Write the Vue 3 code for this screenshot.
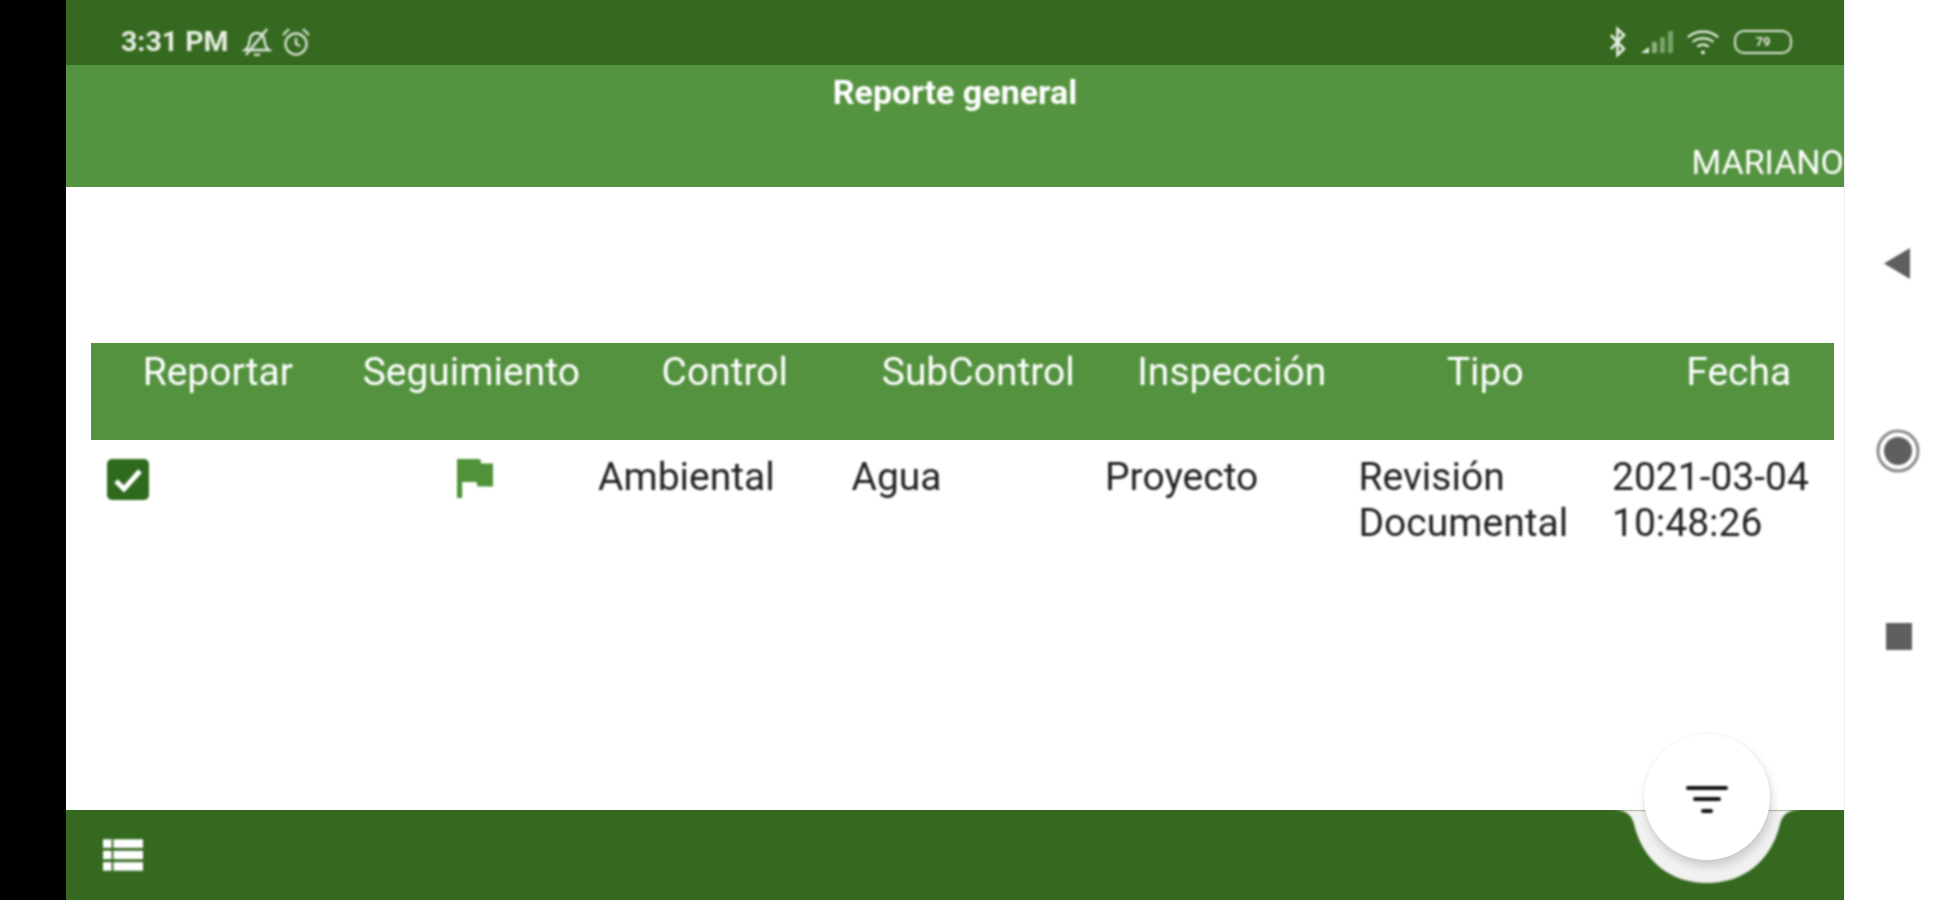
<template>
  <div class="screen">
    <div class="left-edge"></div>

    <div class="phone">
      <div class="status-bar">
        <div class="status-left soft">
          <span class="time">3:31 PM</span>
          <svg class="st-icon" width="30" height="32" viewBox="0 0 30 32" fill="none" stroke="#dfe8da" stroke-width="2.4">
            <path d="M3 24c3-2 4-4 4.500-9 .5-5 3-8 7.500-8s7 3 7.500 8c.5 5 1.500 7 4.500 9z" />
            <path d="M12 28c1.500 1.500 4.500 1.500 6 0" />
            <path d="M4 29 25 3" />
          </svg>
          <svg class="st-icon" width="32" height="32" viewBox="0 0 32 32" fill="none" stroke="#d5e0cf" stroke-width="2.4">
            <circle cx="16" cy="18" r="10.500" />
            <path d="M16 12v6l4 2" />
            <path d="M3 9l6-6M29 9l-6-6" />
          </svg>
        </div>
        <div class="status-right soft">
          <svg width="20" height="32" viewBox="0 0 20 32" fill="none" stroke="#e8eee4" stroke-width="2.600">
            <path d="M3 9l13 14-6.500 6V3L16 9 3 23" />
          </svg>
          <svg width="36" height="28" viewBox="0 0 36 28">
            <path d="M2 25l8-6v6z" fill="#e8eee4" />
            <rect x="13" y="14" width="5" height="11" fill="#8fb07f" />
            <rect x="21" y="9" width="5" height="16" fill="#7ba26a" />
            <rect x="29" y="3" width="5" height="22" fill="#7ba26a" />
          </svg>
          <svg class="wifi" width="34" height="30" viewBox="0 0 36 30" fill="none" stroke="#edf2ea" stroke-width="2.400">
            <path d="M2 10c9-8 23-8 32 0" />
            <path d="M7 15c6-5 16-5 22 0" />
            <path d="M12 20c3.500-3 8.500-3 12 0" />
            <circle cx="18" cy="26" r="2" fill="#edf2ea" stroke="none" />
          </svg>
          <div class="battery"><span>79</span></div>
        </div>
      </div>

      <header class="app-bar">
        <div class="title soft">Reporte general</div>
        <div class="user soft">MARIANO</div>
      </header>

      <main class="content">
        <div class="table">
          <div class="thead">
            <div v-for="col in columns" :key="col" class="th soft">{{ col }}</div>
          </div>
          <div class="tbody">
            <div class="td">
              <div class="checkbox soft">
                <svg width="30" height="24" viewBox="0 0 30 24" fill="none" stroke="#fff" stroke-width="5">
                  <path d="M3 13l8 8L27 3" />
                </svg>
              </div>
            </div>
            <div class="td td-flag">
              <svg class="flag soft" width="36" height="39" viewBox="5 4 14 17" preserveAspectRatio="none">
                <path d="M14.400 6L14 4H5v17h2v-7h5.600l.4 2h7V6z" />
              </svg>
            </div>
            <div v-for="(cell, i) in row" :key="i" class="td soft">
              <div v-for="line in cell" :key="line">{{ line }}</div>
            </div>
          </div>
        </div>
      </main>

      <footer class="bottom-bar">
        <svg class="soft" width="40" height="32" viewBox="0 0 42 33" fill="#fff">
          <rect x="0" y="0" width="9" height="9" />
          <rect x="11" y="0" width="31" height="9" />
          <rect x="0" y="12" width="9" height="9" />
          <rect x="11" y="12" width="31" height="9" />
          <rect x="0" y="24" width="9" height="9" />
          <rect x="11" y="24" width="31" height="9" />
        </svg>
        <svg class="notch soft" width="190" height="90" viewBox="0 0 190 90">
          <path d="M0 0c14 0 19 4 22 14 C31 52 59 73 95 73 C131 73 159 52 168 14 C171 4 176 0 190 0z" fill="#f1f1f1" />
        </svg>
      </footer>

      <button class="fab" type="button" aria-label="Filtrar">
        <svg class="soft" width="42" height="27" viewBox="0 0 42 27" fill="#111">
          <rect x="0" y="0" width="42" height="4" rx="2" />
          <rect x="7" y="11" width="28" height="4" rx="2" />
          <rect x="15" y="23" width="12" height="4" rx="2" />
        </svg>
      </button>
    </div>

    <nav class="nav-bar">
      <svg class="soft" width="26" height="31" viewBox="0 0 26 31">
        <path d="M26 0v31L0 15.500z" fill="#5f5f5f" />
      </svg>
      <svg class="nav-home soft" width="44" height="44" viewBox="0 0 44 44">
        <circle cx="22" cy="22" r="20" fill="none" stroke="#8a8a8a" stroke-width="3" />
        <circle cx="22" cy="22" r="14" fill="#5f5f5f" />
      </svg>
      <div class="nav-square soft"></div>
    </nav>
  </div>
</template>

<script setup>
const columns = ['Reportar', 'Seguimiento', 'Control', 'SubControl', 'Inspección', 'Tipo', 'Fecha']

// first two columns hold the checkbox and the flag
const row = [
  ['Ambiental'],
  ['Agua'],
  ['Proyecto'],
  ['Revisión', 'Documental'],
  ['2021-03-04', '10:48:26']
]
</script>

<style>
html,
body {
  margin: 0;
  background: #fff;
}
</style>

<style scoped>
.screen {
  display: flex;
  width: 1953px;
  height: 900px;
  overflow: hidden;
  font-family: Roboto, "Liberation Sans", sans-serif;
}

/* the capture is an upscaled video frame, so text and icons are a bit soft */
.soft {
  filter: blur(0.8px);
}

.left-edge {
  width: 66px;
  flex: none;
  background: #000;
}

.phone {
  position: relative;
  width: 1778px;
  flex: none;
  display: flex;
  flex-direction: column;
  background: #fff;
  overflow: hidden;
}

.status-bar {
  height: 65px;
  flex: none;
  box-sizing: border-box;
  padding: 18px 52px 0 55px;
  display: flex;
  justify-content: space-between;
  align-items: center;
  background: #35691f;
  color: #e8eee4;
}

.status-left,
.status-right {
  display: flex;
  align-items: center;
}

.status-right {
  gap: 11px;
}

.wifi {
  margin-right: 3px;
}

.time {
  font-size: 28.500px;
  font-weight: 700;
  margin-right: 13px;
}

.st-icon + .st-icon {
  margin-left: 8px;
}

.battery {
  width: 58px;
  height: 24px;
  box-sizing: border-box;
  border: 2.500px solid #dfe8da;
  border-radius: 10px;
  display: flex;
  align-items: center;
  justify-content: center;
  font-size: 13px;
  font-weight: 700;
  color: #dfe8da;
}

.app-bar {
  height: 122px;
  flex: none;
  box-sizing: border-box;
  padding-top: 8px;
  background: #54933f;
  color: #fff;
}

.title {
  text-align: center;
  font-size: 34px;
  font-weight: 700;
  line-height: 38px;
}

.user {
  margin-top: 33px;
  text-align: right;
  font-size: 34px;
  line-height: 36px;
  white-space: nowrap;
}

.content {
  flex: 1;
  min-height: 0;
  padding: 156px 10px 0 25px;
}

.table {
  overflow: hidden;
}

.thead,
.tbody {
  display: grid;
  grid-template-columns: repeat(7, 253.5px);
}

.thead {
  height: 97px;
  box-sizing: border-box;
  padding-top: 7px;
  background: #54923f;
  color: #fff;
}

.th {
  text-align: center;
  font-size: 39px;
  line-height: 44px;
}

.tbody {
  padding-top: 14px;
  color: #212121;
  font-size: 39px;
  line-height: 46px;
}

.checkbox {
  width: 42px;
  height: 41px;
  margin: 5px 0 0 16px;
  border-radius: 5px;
  background: #2f6a1c;
  display: flex;
  align-items: center;
  justify-content: center;
}

.td-flag {
  padding: 5px 0 0 112px;
}

.flag {
  display: block;
  fill: #4f9239;
}

.bottom-bar {
  position: relative;
  height: 90px;
  flex: none;
  box-sizing: border-box;
  padding: 29px 0 0 37px;
  background: #35691f;
}

.notch {
  position: absolute;
  top: 0;
  left: 1546px;
}

.fab {
  position: absolute;
  left: 1578px;
  top: 734px;
  width: 126px;
  height: 126px;
  padding: 0;
  border: none;
  border-radius: 50%;
  background: #fff;
  box-shadow: 2px 6px 10px rgba(0, 0, 0, 0.16), 0 0 3px rgba(0, 0, 0, 0.06);
  display: flex;
  align-items: center;
  justify-content: center;
}

.fab svg {
  margin-top: 5px;
}

.nav-bar {
  flex: 1;
  box-sizing: border-box;
  padding: 248px 0 250px 39px;
  border-left: 1px solid #f0f0f0;
  display: flex;
  flex-direction: column;
  justify-content: space-between;
  background: #fff;
}

.nav-home {
  margin-left: -8px;
}

.nav-square {
  width: 26px;
  height: 27px;
  margin-left: 2px;
  background: #5f5f5f;
}
</style>
